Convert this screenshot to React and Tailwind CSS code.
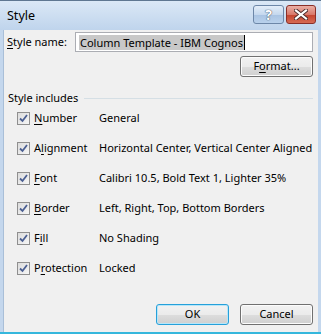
import React from "react";

const rows = [
  { pre: "", key: "N", post: "umber", value: "General" },
  { pre: "A", key: "l", post: "ignment", value: "Horizontal Center, Vertical Center Aligned" },
  { pre: "", key: "F", post: "ont", value: "Calibri 10.5, Bold Text 1, Lighter 35%" },
  { pre: "", key: "B", post: "order", value: "Left, Right, Top, Bottom Borders" },
  { pre: "F", key: "i", post: "ll", value: "No Shading" },
  { pre: "P", key: "r", post: "otection", value: "Locked" },
];

const Check = () => (
  <div className="w-[13px] h-[13px] border border-[#8f8f8f] bg-gradient-to-br from-[#dcdcdc] to-[#f6f6f6] flex items-center justify-center shrink-0">
    <svg width="9" height="9" viewBox="0 0 9 9">
      <path d="M1 4.5 L3.5 7 L8 1" fill="none" stroke="#4b5f92" strokeWidth="1.8" />
    </svg>
  </div>
);

const Button = ({ children, primary }) => (
  <div
    className={
      "w-[73px] h-[21px] rounded-[3px] flex items-center justify-center text-black bg-[linear-gradient(#f2f2f2_0%,#ebebeb_50%,#dddddd_51%,#cfcfcf_100%)] " +
      (primary
        ? "border border-[#26a0da] shadow-[inset_0_0_0_1px_#b8e6f8]"
        : "border border-[#707070] shadow-[inset_0_0_0_1px_#fcfcfc]")
    }
  >
    {children}
  </div>
);

export default function App() {
  return (
    <div
      className="w-[321px] h-[334px] flex flex-col bg-[#c4d7ed] border-t border-[#5f7791] overflow-hidden"
      style={{ fontFamily: '"Noto Sans", "Open Sans", sans-serif' }}
    >
      {/* title bar */}
      <div className="h-[29px] flex items-start bg-gradient-to-b from-[#dbe8f6] to-[#bfd4ec] px-[3px]">
        <span className="text-[12.5px] text-black mt-[6px] ml-[4px]">Style</span>
        <div className="ml-auto flex gap-[2px] mt-[4px] mr-[2px]">
          <div className="w-[31px] h-[19px] rounded-[3px] border border-[#6d87a8] bg-[linear-gradient(#e4eef9_0%,#c5d8ee_50%,#a9c3e2_51%,#b9d1ec_100%)] flex items-center justify-center">
            <span
              className="text-[14px] font-bold text-white leading-none"
              style={{ textShadow: "0 0 1px #3a4a5e, 0 0 1px #3a4a5e" }}
            >
              ?
            </span>
          </div>
          <div className="w-[30px] h-[19px] rounded-[3px] border border-[#8a2f28] bg-[linear-gradient(#eab0a6_0%,#d9796b_50%,#c4432f_51%,#d66a53_100%)] flex items-center justify-center">
            <svg width="14" height="11" viewBox="0 0 14 11">
              <path d="M2 1.5 L12 9.5 M12 1.5 L2 9.5" stroke="#4a2a2a" strokeWidth="4" strokeLinecap="square" />
              <path d="M2 1.5 L12 9.5 M12 1.5 L2 9.5" stroke="#ffffff" strokeWidth="2.2" strokeLinecap="square" />
            </svg>
          </div>
        </div>
      </div>

      {/* client area */}
      <div className="flex-1 flex mx-[3px] border-l border-[#a9bfd8]">
        <div className="flex-1 bg-[#f0f0f0] flex flex-col pt-[2px] pr-[5px] text-[11px] text-black whitespace-nowrap">
          <div className="flex items-center h-[20px]">
            <span className="ml-[3px] w-[68px]">
              <u className="underline-offset-2">S</u>tyle name:
            </span>
            <div className="flex-1 h-[20px] bg-white border border-[#abadb3] flex items-center pl-[3px]">
              <span className="bg-[#c8c8c8] leading-[15px] px-[1px]">Column Template - IBM Cognos</span>
              <span className="w-px h-[15px] bg-black" />
            </div>
          </div>

          <div className="flex justify-end mt-[4px]">
            <Button>
              F<u className="underline-offset-2">o</u>rmat...
            </Button>
          </div>

          <div className="flex items-center mt-[13px] ml-[4px]">
            <span className="text-black">Style includes</span>
            <div className="flex-1 h-px bg-[#d5dfe5] ml-[6px]" />
          </div>

          <div className="flex flex-col mt-[-3px]">
            {rows.map((r, i) => (
              <div key={i} className="h-[30px] flex items-center">
                <div className="ml-[13px] mr-[4px]">
                  <Check />
                </div>
                <span className="w-[65px]">
                  {r.pre}
                  <u className="underline-offset-2">{r.key}</u>
                  {r.post}
                </span>
                <span>{r.value}</span>
              </div>
            ))}
          </div>

          <div className="flex justify-end gap-[11px] mt-[20px]">
            <Button primary>OK</Button>
            <Button>Cancel</Button>
          </div>
        </div>
      </div>
      <div className="h-[2px] bg-[#35b7dc]" />
    </div>
  );
}
